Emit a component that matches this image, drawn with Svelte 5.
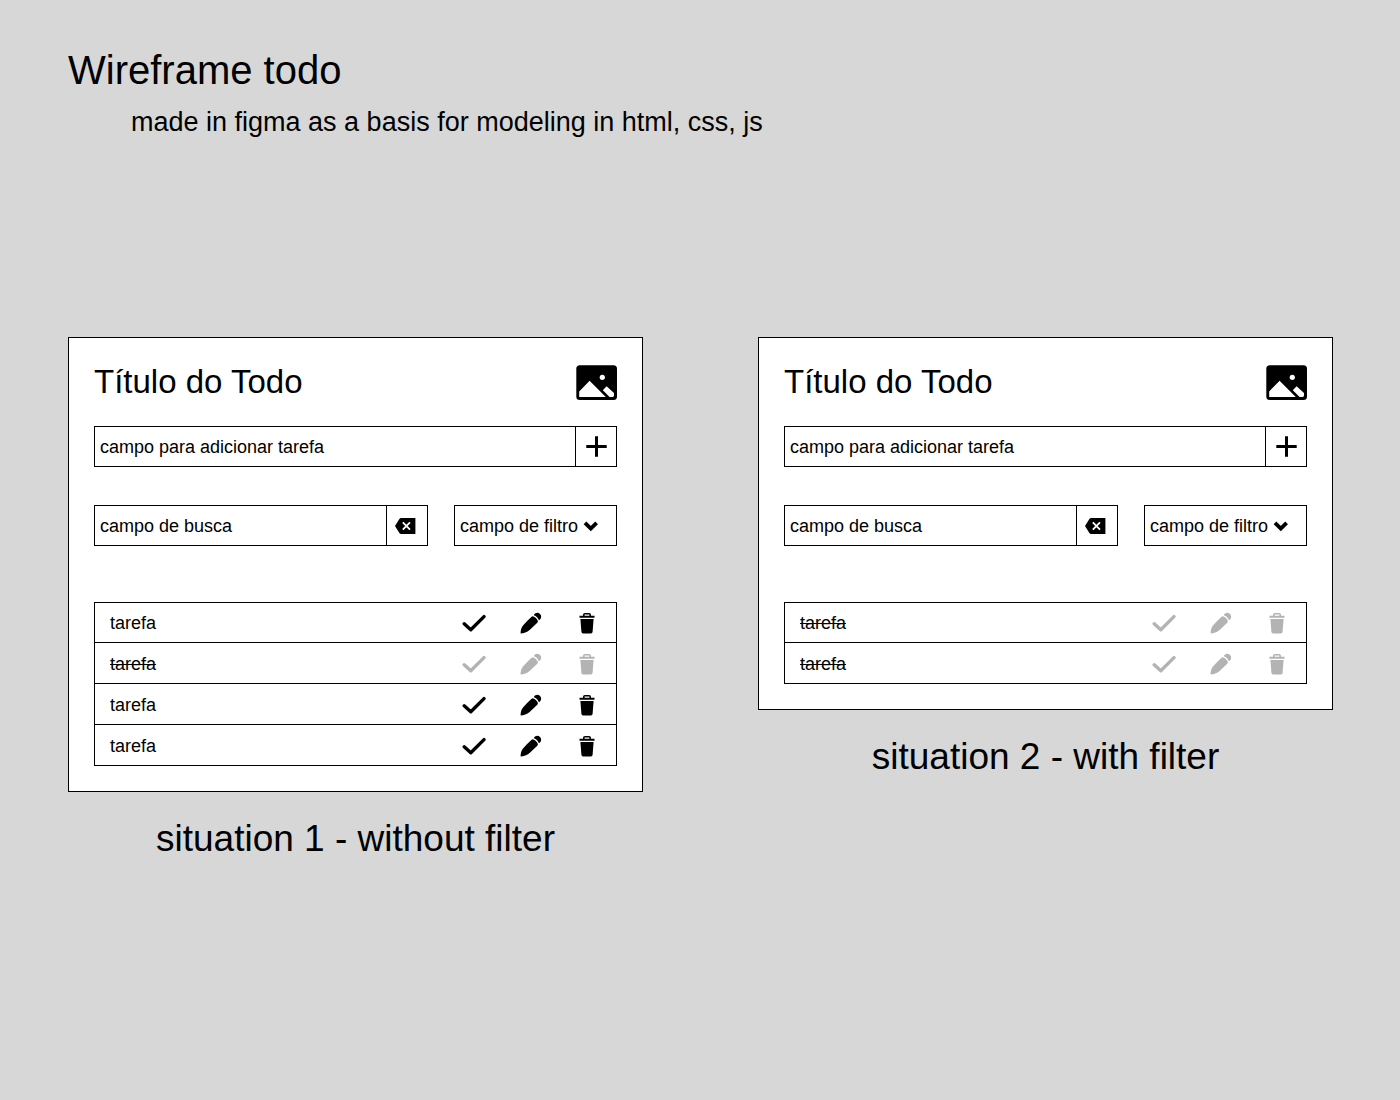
<script>
  const boards = [
    {
      id: 'all',
      caption: 'situation 1 - without filter',
      tasks: [{ done: false }, { done: true }, { done: false }, { done: false }]
    },
    {
      id: 'filtered',
      caption: 'situation 2 - with filter',
      tasks: [{ done: true }, { done: true }]
    }
  ];
</script>

<main>
  <header class="intro">
    <h1>Wireframe todo</h1>
    <p>made in figma as a basis for modeling in html, css, js</p>
  </header>

  <div class="boards">
    {#each boards as board (board.id)}
      <figure>
        <section class="card">
          <div class="card-head">
            <h2>Título do Todo</h2>
            <svg class="picture" viewBox="0 0 41 35" aria-hidden="true">
              <rect x="0.3" y="0.3" width="40.7" height="34.7" rx="3.5" />
              <path class="cut" d="M3.2 26.4 13.6 15.8 29.8 32H3.2ZM26.8 25.2 30.6 21.2 38 28V30.6Q38 32 36.6 32H33.6Z" />
              <circle class="cut" cx="26.3" cy="12.3" r="2.6" />
            </svg>
          </div>

          <form class="field" onsubmit={(e) => e.preventDefault()}>
            <input type="text" aria-label="Adicionar tarefa" placeholder="campo para adicionar tarefa" />
            <button type="submit" aria-label="Adicionar">
              <svg class="icon" viewBox="0 0 24 24" aria-hidden="true">
                <path class="line" d="M12.5 1.3V21.7M2.3 11.5H22.7" />
              </svg>
            </button>
          </form>

          <div class="tools">
            <div class="field search">
              <input type="text" aria-label="Buscar" placeholder="campo de busca" />
              <button type="button" aria-label="Limpar busca">
                <svg class="icon" viewBox="0 0 24 24" aria-hidden="true">
                  <path d="M0 12 4.2 5.2Q4.9 4 6.2 4H20.4V20H6.2Q4.9 20 4.2 18.8Z" />
                  <path class="cross" d="M7.8 8.4 15 15.6M15 8.4 7.8 15.6" />
                </svg>
              </button>
            </div>
            <div class="filter">
              <select aria-label="Filtrar">
                <option>campo de filtro</option>
              </select>
              <svg class="chevron" viewBox="0 0 16 12" aria-hidden="true">
                <path d="M2 2.8 7.8 8.6 13.6 2.8" />
              </svg>
            </div>
          </div>

          <ul>
            {#each board.tasks as task}
              <li class:done={task.done}>
                <span>tarefa</span>
                <button type="button" aria-label="Concluir">
                  <svg class="icon" viewBox="0 0 24 24" aria-hidden="true">
                    <path class="tick" d="M2.2 12.8 8.8 18.8 22 5.6" />
                  </svg>
                </button>
                <button type="button" aria-label="Editar">
                  <svg class="icon" viewBox="0 0 24 24" aria-hidden="true">
                    <path d="M1.6 22.4C1.5 19.6 2.2 16.6 4 14.4 6.6 11.4 9.6 8.4 12.6 5.8Q13.4 5.1 14.4 5.4C16.6 6.2 18 7.8 18.8 9.8Q19.1 10.9 18.3 11.7L10.6 19C8 21.2 4.8 22.3 1.6 22.4Z" />
                    <path d="M14.8 4.2C16.2 1.6 19 1 21 2.9 22.9 4.8 22.4 7.6 19.9 9.3 19.2 7 17.4 5 14.8 4.2Z" />
                  </svg>
                </button>
                <button type="button" aria-label="Excluir">
                  <svg class="icon" viewBox="0 0 24 24" aria-hidden="true">
                    <path d="M3.5 4.8H7V3.8Q7 1.9 8.9 1.9H13.1Q15 1.9 15 3.8V4.8H18.5V6.8H3.5ZM8.6 4.8H13.4V3.5H8.6Z" />
                    <path d="M4.4 7.9H17.6L16.6 20.8Q16.5 22.4 14.9 22.4H7.1Q5.5 22.4 5.4 20.8Z" />
                  </svg>
                </button>
              </li>
            {/each}
          </ul>
        </section>
        <figcaption>{board.caption}</figcaption>
      </figure>
    {/each}
  </div>
</main>

<style>
  :global(body) {
    background: #d7d7d7;
  }

  main {
    padding: 47px 67px 47px 68px;
    color: #000;
    font-family: 'Liberation Sans', Arial, sans-serif;
    font-size: 18px;
  }

  main :global(*) {
    box-sizing: border-box;
  }

  h1,
  h2,
  p,
  ul,
  figure {
    margin: 0;
    padding: 0;
    font-weight: 400;
  }

  h1 {
    font-size: 40px;
    line-height: 46px;
  }

  .intro p {
    margin-top: 13px;
    padding-left: 63px;
    font-size: 27px;
    line-height: 32px;
  }

  .boards {
    display: grid;
    grid-template-columns: 1fr 1fr;
    align-items: start;
    gap: 115px;
    margin-top: 199px;
  }

  .card {
    padding: 25px;
    border: 1px solid #000;
    background: #fff;
  }

  .card-head {
    display: flex;
    justify-content: space-between;
    align-items: center;
    min-height: 38px;
    margin-bottom: 25px;
  }

  h2 {
    font-size: 33px;
    line-height: 38px;
  }

  .picture {
    width: 41px;
    height: 35px;
  }

  .cut {
    fill: #fff;
  }

  .field {
    display: flex;
    height: 41px;
    border: 1px solid #000;
  }

  input,
  select {
    flex: 1;
    min-width: 0;
    margin: 0;
    padding: 0 5px;
    border: 0;
    border-radius: 0;
    background: transparent;
    color: #000;
    font: inherit;
    appearance: none;
  }

  input {
    padding-top: 2px;
  }

  input::placeholder {
    color: #000;
    opacity: 1;
  }

  button {
    display: flex;
    justify-content: center;
    align-items: center;
    margin: 0;
    padding: 0;
    border: 0;
    background: transparent;
    color: inherit;
    font: inherit;
    cursor: pointer;
  }

  .field button {
    width: 41px;
    border-left: 1px solid #000;
  }

  .icon {
    width: 24px;
    height: 24px;
    fill: currentColor;
  }

  .line,
  .tick,
  .cross,
  .chevron path {
    fill: none;
    stroke: currentColor;
    stroke-width: 3;
  }

  .tick {
    stroke-width: 3.4;
    stroke-linecap: round;
    stroke-linejoin: round;
  }

  .cross {
    stroke: #fff;
    stroke-width: 1.8;
  }

  .chevron path {
    stroke-width: 3.8;
  }

  .tools {
    display: flex;
    gap: 26px;
    margin-top: 38px;
  }

  .search {
    flex: 1;
    min-width: 0;
  }

  .filter {
    position: relative;
    display: flex;
    width: 163px;
    border: 1px solid #000;
  }

  .chevron {
    position: absolute;
    top: 14px;
    left: 128px;
    width: 16px;
    height: 12px;
    pointer-events: none;
  }

  ul {
    margin-top: 56px;
    border: solid #000;
    border-width: 0 1px;
    list-style: none;
  }

  li {
    display: flex;
    height: 41px;
    padding-top: 2px;
    border-bottom: 1px solid #000;
  }

  li:first-child {
    padding-top: 1px;
    border-top: 1px solid #000;
  }

  li span {
    margin: auto auto auto 15px;
  }

  li button {
    width: 57px;
  }

  .done span {
    text-decoration: line-through;
  }

  .done button {
    color: #b3b3b3;
  }

  figcaption {
    margin-top: 25px;
    font-size: 37px;
    line-height: 44px;
    text-align: center;
  }
</style>
